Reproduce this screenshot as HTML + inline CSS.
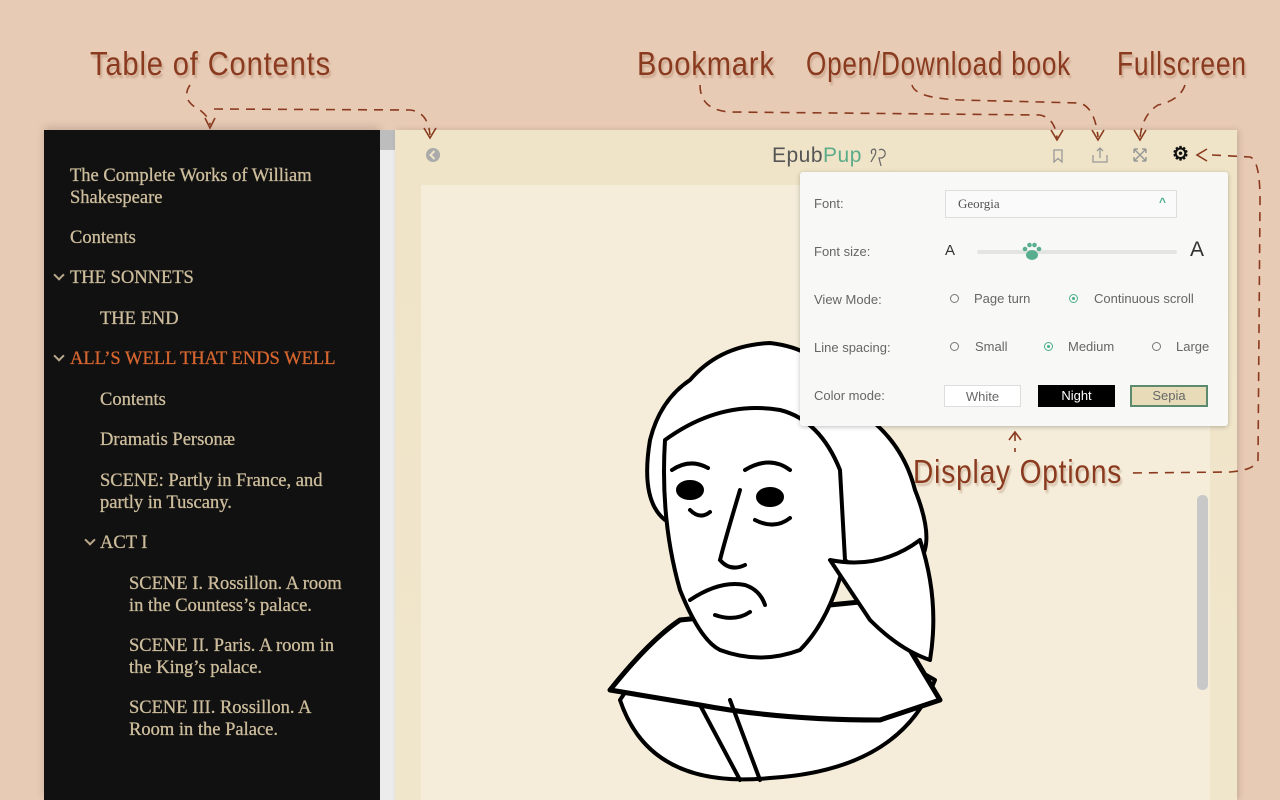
<!DOCTYPE html>
<html><head><meta charset="utf-8"><style>
*{margin:0;padding:0;box-sizing:border-box}
body{width:1280px;height:800px;overflow:hidden;background:#e8cbb5;position:relative;font-family:"Liberation Sans",sans-serif}
.ann{position:absolute;z-index:10;color:#8a3a1e;font-family:"Liberation Sans Narrow","Liberation Sans",sans-serif;font-size:33px;text-shadow:2px 3px 2px rgba(140,90,60,.3);letter-spacing:1px;transform-origin:left top;white-space:nowrap}
#side{position:absolute;left:44px;top:130px;width:336px;height:670px;background:#111;box-shadow:0 -3px 8px rgba(0,0,0,.15)}
.t{position:absolute;color:#cdbd9c;font-family:"Liberation Serif",serif;font-size:18.5px;line-height:22px;white-space:nowrap;-webkit-text-stroke:.3px #cdbd9c}
.t.o{color:#d5652f;-webkit-text-stroke:.3px #d5652f}
.chev{position:absolute;width:8px;height:8px;border-right:2px solid #b9a98a;border-bottom:2px solid #b9a98a;transform:rotate(45deg)}
#sb{position:absolute;left:380px;top:130px;width:15px;height:670px;background:#ececec}
#sb div{height:20px;background:#bdbdbd}
#reader{position:absolute;left:395px;top:130px;width:842px;height:670px;background:linear-gradient(#efe4c7,#f0e6cc);box-shadow:2px 0 6px rgba(0,0,0,.15)}
#page{position:absolute;left:26px;top:55px;width:789px;height:615px;background:#f5edda}
#panel{position:absolute;z-index:5;left:800px;top:172px;width:428px;height:254px;background:#f8f8f7;border-radius:3px;box-shadow:0 1px 5px rgba(0,0,0,.25);font-size:13px;color:#666}
#panel .l{position:absolute;left:14px}
.rad{position:absolute;width:9px;height:9px;border:1px solid #777;border-radius:50%}
.rad.on{border-color:#4aae8c}
.rad.on:after{content:"";position:absolute;left:2px;top:2px;width:3px;height:3px;border-radius:50%;background:#4aae8c}
.btn{position:absolute;top:213px;width:77px;height:22px;text-align:center;line-height:21px;font-size:13px}
</style></head><body>

<div class="ann" style="left:90px;top:45px;transform:scaleX(.88)">Table of Contents</div>
<div class="ann" style="left:637px;top:45px;transform:scaleX(.88)">Bookmark</div>
<div class="ann" style="left:806px;top:45px;transform:scaleX(.79)">Open/Download book</div>
<div class="ann" style="left:1117px;top:45px;transform:scaleX(.8)">Fullscreen</div>
<div class="ann" style="left:913px;top:453px;transform:scaleX(.85)">Display Options</div>

<svg style="position:absolute;left:0;top:0;z-index:9" width="1280" height="800" fill="none" stroke="#8a3a1e" stroke-width="1.6" stroke-dasharray="9 7">
<path d="M190 85 Q180 100 200 110 Q210 118 210 125"/>
<path d="M214 109 L410 110 Q428 112 430 135"/>
<path d="M700 85 Q700 110 730 112 L1040 115 Q1055 118 1057 138"/>
<path d="M912 85 Q915 98 960 100 L1080 103 Q1095 108 1098 137"/>
<path d="M1185 85 Q1180 100 1158 105 Q1142 115 1140 138"/>
<path d="M1212 155 L1250 157 Q1260 160 1260 200 L1258 460 Q1255 470 1230 472 L1130 473"/>
<path d="M1015 432 L1015 452"/>
<g stroke-dasharray="none"><path d="M205 118 L210 128 L215 118"/><path d="M424 128 L430 138 L436 128"/><path d="M1051 130 L1057 140 L1063 130"/><path d="M1092 130 L1098 140 L1104 130"/><path d="M1134 130 L1140 140 L1146 130"/><path d="M1207 149 L1197 155 L1207 161"/><path d="M1009 440 L1015 432 L1021 440"/></g>
</svg>

<div id="side">
<div class="t" style="left:26px;top:35px">The Complete Works of William<br>Shakespeare</div>
<div class="t" style="left:26px;top:97px">Contents</div>
<span class="chev" style="left:11px;top:141px"></span><div class="t" style="left:26px;top:137px">THE SONNETS</div>
<div class="t" style="left:56px;top:178px">THE END</div>
<span class="chev" style="left:11px;top:222px"></span><div class="t o" style="left:26px;top:218px">ALL’S WELL THAT ENDS WELL</div>
<div class="t" style="left:56px;top:259px">Contents</div>
<div class="t" style="left:56px;top:299px">Dramatis Personæ</div>
<div class="t" style="left:56px;top:340px">SCENE: Partly in France, and<br>partly in Tuscany.</div>
<span class="chev" style="left:42px;top:406px"></span><div class="t" style="left:56px;top:402px">ACT I</div>
<div class="t" style="left:85px;top:443px">SCENE I. Rossillon. A room<br>in the Countess’s palace.</div>
<div class="t" style="left:85px;top:505px">SCENE II. Paris. A room in<br>the King’s palace.</div>
<div class="t" style="left:85px;top:567px">SCENE III. Rossillon. A<br>Room in the Palace.</div>
</div>
<div id="sb"><div></div></div>

<div id="reader">
<div id="page"></div>
<div style="position:absolute;left:802px;top:365px;width:11px;height:195px;background:#c8c8c8;border-radius:5px"></div>
<svg style="position:absolute;left:30px;top:17px" width="16" height="16"><circle cx="8" cy="8" r="7" fill="#aaa"/><path d="M9.5 4 L5.5 8 L9.5 12" stroke="#efe4c7" stroke-width="2" fill="none"/></svg>
<div style="position:absolute;left:377px;top:14px;font-size:21px;color:#555;letter-spacing:.5px">Epub<span style="color:#5cab8a">Pup</span></div>
<svg style="position:absolute;left:472px;top:16px" width="24" height="24" fill="none" stroke="#666" stroke-width="1.2"><path d="M5 8 Q3 4 7 3 Q10 4 8 9 Q6 12 4 16 M12 4 Q16 2 18 6 Q19 10 15 12 L12 12 L14 20"/></svg>
<svg style="position:absolute;left:655px;top:18px" width="16" height="16" fill="none" stroke="#999" stroke-width="1.3"><path d="M4 2 H12 V14 L8 10.5 L4 14 Z"/></svg>
<svg style="position:absolute;left:696px;top:16px" width="18" height="18" fill="none" stroke="#999" stroke-width="1.3"><path d="M2 9 V16 H16 V9 M9 12 V2 M6 5 L9 2 L12 5"/></svg>
<svg style="position:absolute;left:738px;top:18px" width="14" height="14" fill="none" stroke="#999" stroke-width="1.5"><path d="M1 1 L13 13 M13 1 L1 13 M1 1 V5 M1 1 H5 M13 1 H9 M13 1 V5 M1 13 V9 M1 13 H5 M13 13 H9 M13 13 V9"/></svg>
<div style="position:absolute;left:777px;top:13px;font-size:19px;color:#111;font-weight:bold">⚙</div>
</div>

<svg style="position:absolute;left:600px;top:335px" width="350" height="450" viewBox="600 335 350 450">
<g stroke="#000" stroke-width="4" fill="#fff" stroke-linejoin="round">
<path d="M620 700 Q650 790 770 778 Q900 770 935 680 L900 660 L640 670 Z"/>
<path d="M610 690 Q650 640 680 620 L880 600 L940 700 L880 720 Q780 720 700 705 Z" stroke-width="5"/>
<path d="M665 520 Q640 500 650 440 Q660 400 690 380 Q720 345 770 343 Q830 350 840 400 Q900 430 915 490 Q935 540 920 560 L870 580 L820 540 Z"/>
<path d="M665 440 Q660 520 680 590 Q700 640 720 650 Q760 665 800 650 Q830 620 845 560 L840 470 Q820 420 780 410 Q720 400 665 440 Z"/>
<path d="M830 560 Q880 570 920 540 Q940 600 930 660 Q900 650 870 620 Z"/>
</g>
<g stroke="#000" stroke-width="4" fill="none" stroke-linecap="round">
<path d="M672 470 Q690 458 708 468"/><path d="M745 470 Q770 455 790 470"/>
<ellipse cx="690" cy="490" rx="12" ry="8" fill="#000"/><ellipse cx="770" cy="497" rx="12" ry="8" fill="#000"/>
<path d="M740 490 Q725 540 720 560 Q730 572 745 565"/>
<path d="M690 600 Q720 580 745 585 Q760 590 765 605"/>
<path d="M715 615 Q735 622 750 612"/>
<path d="M690 510 Q700 520 710 512 M755 520 Q775 530 790 518"/>
<path d="M700 705 L740 780 M730 700 L760 780"/>
</g>
</svg>

<div id="panel">
<div class="l" style="top:24px">Font:</div>
<div style="position:absolute;left:145px;top:18px;width:232px;height:28px;border:1px solid #ddd;background:#fafafa;font-family:'Liberation Serif',serif;font-size:13px;color:#555;padding:5px 12px">Georgia<span style="position:absolute;right:10px;top:4px;color:#4aae8c;font-family:'Liberation Sans';font-size:12px;font-weight:bold">^</span></div>
<div class="l" style="top:72px">Font size:</div>
<div style="position:absolute;left:145px;top:70px;font-size:15px;color:#333">A</div>
<div style="position:absolute;left:177px;top:78px;width:200px;height:4px;background:#e4e4e4;border-radius:2px"></div>
<svg style="position:absolute;left:221px;top:68px" width="22" height="22" fill="#5aae90"><ellipse cx="11" cy="15" rx="6" ry="5"/><circle cx="4" cy="9" r="2.3"/><circle cx="8.5" cy="5" r="2.3"/><circle cx="13.5" cy="5" r="2.3"/><circle cx="18" cy="9" r="2.3"/></svg>
<div style="position:absolute;left:390px;top:66px;font-size:21px;color:#333">A</div>
<div class="l" style="top:120px">View Mode:</div>
<span class="rad" style="left:150px;top:122px"></span><div style="position:absolute;left:174px;top:119px">Page turn</div>
<span class="rad on" style="left:269px;top:122px"></span><div style="position:absolute;left:294px;top:119px">Continuous scroll</div>
<div class="l" style="top:168px">Line spacing:</div>
<span class="rad" style="left:150px;top:170px"></span><div style="position:absolute;left:175px;top:167px">Small</div>
<span class="rad on" style="left:244px;top:170px"></span><div style="position:absolute;left:268px;top:167px">Medium</div>
<span class="rad" style="left:352px;top:170px"></span><div style="position:absolute;left:376px;top:167px">Large</div>
<div class="l" style="top:216px">Color mode:</div>
<div class="btn" style="left:144px;background:#fff;border:1px solid #ddd">White</div>
<div class="btn" style="left:238px;background:#000;color:#fff">Night</div>
<div class="btn" style="left:330px;width:78px;background:#e8dcb8;border:2px solid #5b8a6c;line-height:18px">Sepia</div>
</div>
</body></html>
